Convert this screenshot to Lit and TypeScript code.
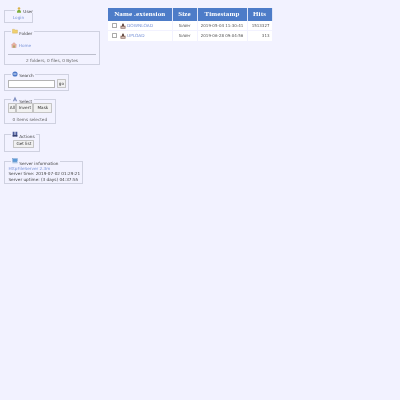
import { LitElement, html, css, svg } from "lit";
import { customElement } from "lit/decorators.js";

const user = svg`<svg class="ic" viewBox="0 0 6 7"><circle cx="3" cy="1.8" r="1.5" fill="#d9b24a"/><path d="M.6 6.6c0-2.4 1-3 2.4-3s2.4.6 2.4 3z" fill="#7fae3c"/></svg>`;
const folder = svg`<svg class="ic" viewBox="0 0 7 6"><path d="M.5 1h2.3l.6.8h3v3.7H.5z" fill="#f0d070" stroke="#c9a850" stroke-width=".4"/></svg>`;
const home = svg`<svg class="ic" viewBox="0 0 7 7"><path d="M.3 3.4 3.5.5l3.2 2.9H6v3.2H1V3.4z" fill="#e8b0a0" stroke="#b88" stroke-width=".3"/><rect x="2.8" y="4" width="1.4" height="2.6" fill="#8aa04a"/></svg>`;
const globe = svg`<svg class="ic" viewBox="0 0 7 7"><circle cx="3.5" cy="3.5" r="3" fill="#4d78c8"/><path d="M1.6 2.8h3.6v1.4H1.6z" fill="#c5d6f2"/></svg>`;
const cursor = svg`<svg class="ic" viewBox="0 0 7 7"><path d="M3.5.5 6 6H4.4L3.5 4 2.6 6H1z" fill="#7f8fc0"/></svg>`;
const actions = svg`<svg class="ic" viewBox="0 0 7 7"><path d="M.8.8h2.2v5.6H.8zM4 .8h2.2v5.6H4z" fill="#4a5a9a"/><path d="M.8 4.6h5.4v1.8H.8z" fill="#38406e"/></svg>`;
const server = svg`<svg class="ic" viewBox="0 0 8 7"><rect x="1" y=".5" width="6" height="4" fill="#5b9bd8" stroke="#3a70b0" stroke-width=".4"/><path d="M.5 5.2h7v1.3h-7z" fill="#8fb4dc"/></svg>`;
const pack = svg`<svg class="fi" viewBox="0 0 7 7"><path d="M.6 3.2h5.8v3.4H.6z" fill="#8a6a60"/><path d="M2.4 3.4V1.6L3.5.4l1.1 1.2v1.8z" fill="#5a4038"/><path d="M1.5 4.4h4v1.2h-4z" fill="#e8d8d0"/></svg>`;

@customElement("app-root")
export class AppRoot extends LitElement {
  static styles = css`
    :host { display: block; width: 400px; height: 400px; background: #f2f2ff; font-family: "DejaVu Sans", Verdana, sans-serif; font-size: 4.2px; line-height: 5.4px; color: #666; overflow: hidden; }
    .page { display: flex; align-items: flex-start; padding: 7px 0 0 4px; filter: blur(0.25px); }
    .side { width: 104px; flex: none; display: flex; flex-direction: column; align-items: flex-start; }
    fieldset { margin: 0; padding: 0; border: 0.6px solid #cfd1e0; box-sizing: border-box; min-width: 0; }
    legend { padding: 0 1.5px 0 0.5px; margin-left: 6.4px; color: #444; display: flex; align-items: flex-start; gap: 1.4px; height: 6px; line-height: 9.5px; }
    .ic { width: 6px; height: 6px; margin-top: -0.5px; flex: none; }
    a { color: #7a95d8; text-decoration: none; }
    .user { width: 29px; height: 15.7px; text-align: center; }
    .user a { display: block; line-height: 5px; padding-top: 1.5px; }
    .folder { width: 96px; height: 36px; margin-top: 6.3px; }
    .home { display: flex; align-items: center; gap: 1.4px; margin-top: 4.5px; padding-left: 6.4px; height: 13px; }
    .home .ic { margin: -1.5px 0 0; }
    .folder hr { margin: 1.5px 3px 0; border: 0; border-top: 0.6px solid #bcbecc; }
    .stat { text-align: center; margin-top: 3px; color: #666; }
    .search { width: 64.5px; height: 19.2px; margin-top: 6.5px; }
    .sr { display: flex; gap: 1.6px; padding-left: 3.4px; align-items: flex-start; }
    .inp { width: 47px; height: 8px; background: #fff; border: 0.5px solid #b4b4b4; box-sizing: border-box; margin-top: 2.5px; }
    .btn { background: #f1f1f1; border: 0.6px solid #c4c4c4; border-radius: 0.6px; color: #333; box-sizing: border-box; display: flex; align-items: center; justify-content: center; }
    .go { width: 9px; height: 9.4px; margin-top: 1.5px; }
    .select { width: 51.5px; height: 27.5px; margin-top: 6.3px; }
    .bts { display: flex; padding-left: 3.4px; }
    .bts .btn { height: 10px; }
    .sel { text-align: center; margin-top: 4.2px; color: #666; }
    .actions { width: 35.5px; height: 19.7px; margin-top: 7.5px; }
    .gl { width: 21px; height: 8.4px; margin: 2px 0 0 8.4px; }
    .info { width: 78.5px; height: 25.5px; margin-top: 7.3px; color: #444; }
    .info .l { padding-left: 3.4px; white-space: nowrap; }
    .info .l:first-of-type { margin-top: 0.8px; }
    table { margin-top: 1px; border-collapse: separate; border-spacing: 0; table-layout: fixed; width: 164.5px; }
    th { background: #4d7cc8; color: #fff; font-family: "Liberation Serif", serif; font-weight: bold; font-size: 7px; height: 13px; padding: 0; border-right: 0.7px solid #dfe5f8; text-align: center; letter-spacing: 0.15px; }
    td { height: 9.3px; padding: 0 1px; background: #fff; border-bottom: 0.6px solid #f2f2ff; border-right: 0.6px solid #f2f2ff; white-space: nowrap; font-size: 4px; color: #555; }
    .n { color: #7a95d8; font-size: 4.3px; }
    .nc { display: flex; align-items: center; }
    .cb { width: 5px; height: 5px; border: 0.5px solid #aaa; background: #fff; border-radius: 0.5px; box-sizing: border-box; margin: 0 3px 0 3px; }
    .fi { width: 6px; height: 6px; margin-right: 1px; }
    .c { text-align: center; font-style: italic; }
    .t { text-align: center; }
    .r { text-align: right; padding-right: 2px; }
  `;

  render() {
    return html`<div class="page">
      <div class="side">
        <fieldset class="user"><legend>${user}User</legend><a>Login</a></fieldset>
        <fieldset class="folder"><legend>${folder}Folder</legend>
          <div class="home">${home}<a>Home</a></div><hr />
          <div class="stat">2 folders, 0 files, 0 Bytes</div>
        </fieldset>
        <fieldset class="search"><legend>${globe}Search</legend>
          <div class="sr"><div class="inp"></div><div class="btn go">go</div></div>
        </fieldset>
        <fieldset class="select"><legend>${cursor}Select</legend>
          <div class="bts"><div class="btn" style="width:8px">All</div><div class="btn" style="width:17px">Invert</div><div class="btn" style="width:19px">Mask</div></div>
          <div class="sel">0 items selected</div>
        </fieldset>
        <fieldset class="actions"><legend>${actions}Actions</legend><div class="btn gl">Get list</div></fieldset>
        <fieldset class="info"><legend>${server}Server information</legend>
          <div class="l"><a>HttpFileServer 2.3m</a></div><div class="l">Server time: 2019-07-02 01:29:21</div><div class="l">Server uptime: (3 days) 04:37:55</div>
        </fieldset>
      </div>
      <table>
        <colgroup><col style="width:64.5px" /><col style="width:25px" /><col style="width:50px" /><col style="width:25px" /></colgroup>
        <tr><th>Name .extension</th><th>Size</th><th>Timestamp</th><th>Hits</th></tr>
        <tr><td><div class="nc"><span class="cb"></span>${pack}<span class="n">DOWNLOAD</span></div></td><td class="c">folder</td><td class="t">2019-05-04 11:30:41</td><td class="r">1513327</td></tr>
        <tr><td><div class="nc"><span class="cb"></span>${pack}<span class="n">UPLOAD</span></div></td><td class="c">folder</td><td class="t">2019-06-28 09:04:56</td><td class="r">313</td></tr>
      </table>
    </div>`;
  }
}
